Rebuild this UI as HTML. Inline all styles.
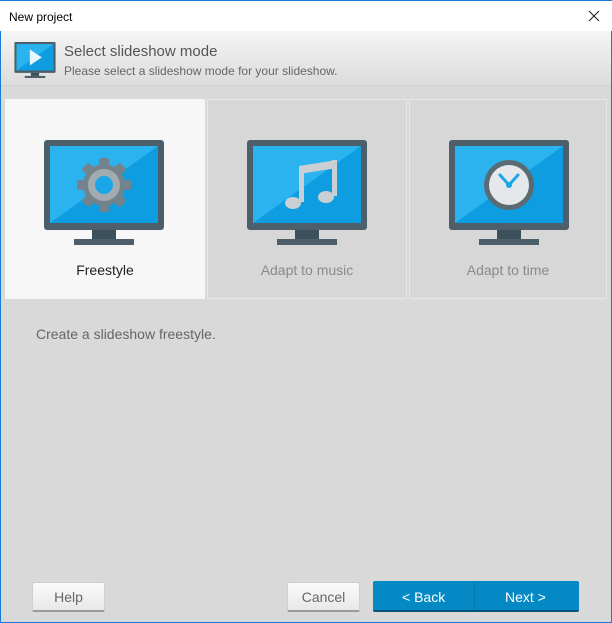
<!DOCTYPE html>
<html><head><style>
*{margin:0;padding:0;box-sizing:border-box}
body{width:612px;height:623px;overflow:hidden;background:#d9d9d9;font-family:"Liberation Sans",sans-serif;position:relative}
.win{position:absolute;left:0;top:0;width:612px;height:623px;border:1px solid #1a7bd0;border-top:none}
.title{position:absolute;left:0;top:0;width:612px;height:31px;background:#fff;border-top:1px solid #1a7bd0}
.title span{position:absolute;left:9px;top:9px;font-size:12px;color:#000}
.hdr{position:absolute;left:1px;top:31px;width:610px;height:55px;background:linear-gradient(#f5f5f5,#dcdcdc);border-bottom:1px solid #d0d0d0}
.h1{position:absolute;left:64px;top:43px;font-size:15px;color:#555}
.h2{position:absolute;left:64px;top:64px;font-size:12px;color:#666}
.tile{position:absolute;top:99px;height:200px;border:1px solid #e8e8e8;background:#d7d7d7}
.tile .lbl{position:absolute;left:0;right:0;top:162px;text-align:center;font-size:14px;color:#8a8a8a}
.tile svg{position:absolute;top:40px}
.desc{position:absolute;left:36px;top:326px;font-size:14px;color:#666}
.btn{position:absolute;top:582px;height:30px;border:1px solid #cfcfcf;border-bottom:2px solid #9a9a9a;border-radius:2px;background:linear-gradient(#fbfbfb,#e8e8e8);font-size:14px;color:#666;text-align:center;line-height:29px}
.blue{position:absolute;top:581px;height:31px;left:373px;width:206px;background:#0489c4;border-radius:2px;border-bottom:2px solid #04527a;color:#fff;font-size:14px}
.blue span{position:absolute;top:8px}
</style></head><body>
<svg width="0" height="0" style="position:absolute"><defs>
<g id="mon">
<rect x="0" y="0" width="120" height="90" rx="3" fill="#4c5f6a"/>
<rect x="6" y="6" width="108" height="77" fill="#2bb3f0"/>
<polygon points="6,83 114,6 114,83" fill="#0d9de0"/>
<rect x="48" y="90" width="24" height="9" fill="#3d515c"/>
<rect x="30" y="99" width="60" height="6" fill="#4c5f6a"/>
</g></defs></svg>
<div class="win"></div>
<div class="title"><span>New project</span>
<svg style="position:absolute;left:588px;top:9px" width="12" height="12"><path d="M1 1L11 11M11 1L1 11" stroke="#222" stroke-width="1.1"/></svg></div>
<div class="hdr"></div>
<svg style="position:absolute;left:14px;top:42px" width="42" height="36" viewBox="0 0 120 105"><use href="#mon"/><polygon points="45,22 45,68 80,45" fill="#e8f6fd"/></svg>
<div class="h1">Select slideshow mode</div>
<div class="h2">Please select a slideshow mode for your slideshow.</div>

<div class="tile" style="left:5px;width:200px;background:#f7f7f7;border-color:#f7f7f7">
<svg style="left:38px" width="120" height="106"><use href="#mon"/>
<g transform="translate(60,45)" fill="#74838b">
<circle r="21"/>
<g id="t"><rect x="-5" y="-27" width="10" height="9" rx="2"/></g>
<use href="#t" transform="rotate(45)"/><use href="#t" transform="rotate(90)"/><use href="#t" transform="rotate(135)"/><use href="#t" transform="rotate(180)"/><use href="#t" transform="rotate(225)"/><use href="#t" transform="rotate(270)"/><use href="#t" transform="rotate(315)"/>
<circle r="16" fill="#a2abb0"/><circle r="9" fill="#1aa6e6"/></g></svg>
<div class="lbl" style="color:#222">Freestyle</div></div>

<div class="tile" style="left:207px;width:200px">
<svg style="left:39px" width="120" height="106"><use href="#mon"/>
<g fill="#c9cfd3"><polygon points="52,26 90,20 90,28 52,34"/><rect x="52" y="26" width="5" height="36"/><rect x="85" y="20" width="5" height="36"/>
<ellipse cx="46" cy="63" rx="8" ry="6"/><ellipse cx="79" cy="57" rx="8" ry="6"/></g></svg>
<div class="lbl">Adapt to music</div></div>

<div class="tile" style="left:409px;width:198px">
<svg style="left:39px" width="120" height="106"><use href="#mon"/>
<circle cx="60" cy="45" r="25" fill="#5b6b74"/><circle cx="60" cy="45" r="20" fill="#e4e8ea"/>
<polyline points="51,35 60,45 69,35" fill="none" stroke="#1aa6e6" stroke-width="3" stroke-linecap="round"/><circle cx="60" cy="45" r="3" fill="#1aa6e6"/></svg>
<div class="lbl">Adapt to time</div></div>

<div class="desc">Create a slideshow freestyle.</div>
<div class="btn" style="left:32px;width:73px">Help</div>
<div class="btn" style="left:287px;width:73px">Cancel</div>
<div class="blue"><span style="left:29px">&lt; Back</span><div style="position:absolute;left:101px;top:0;width:1px;height:29px;background:#0677ab"></div><span style="left:132px">Next &gt;</span></div>
</body></html>
